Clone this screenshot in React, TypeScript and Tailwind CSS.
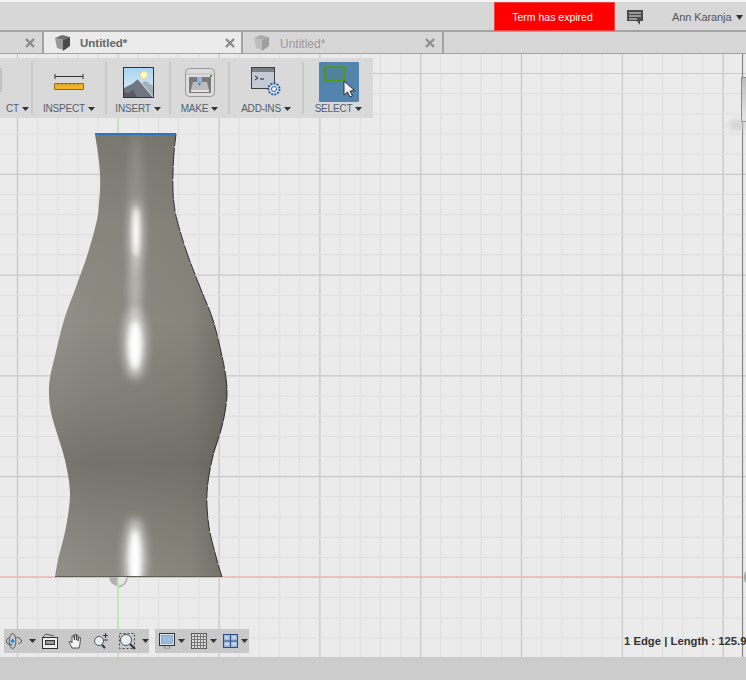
import React from "react";

const leftPts: [number, number][] = [[95,134],[98,153],[100,173],[100,190],[99,203],[97,220],[88,253],[76,287],[64,320],[55,356],[50,378],[49,395],[51,412],[56,430],[65,460],[70,493],[66,527],[58,560],[55,577]];
const rightPts: [number, number][] = [[176,134],[174,153],[173,173],[173,190],[174,203],[177,220],[187,253],[200,287],[213,320],[222,356],[226,378],[227,395],[225,412],[221,430],[212,460],[207,493],[209,527],[217,560],[222,577]];

function spline(p: [number, number][]) {
  let d = "";
  for (let i = 0; i < p.length - 1; i++) {
    const a = p[Math.max(i - 1, 0)], b = p[i], c = p[i + 1], e = p[Math.min(i + 2, p.length - 1)];
    d += `C${b[0] + (c[0] - a[0]) / 6} ${b[1] + (c[1] - a[1]) / 6} ${c[0] - (e[0] - b[0]) / 6} ${c[1] - (e[1] - b[1]) / 6} ${c[0]} ${c[1]}`;
  }
  return d;
}

const rightPath = `M176 134${spline(rightPts)}`;
const leftRev = [...leftPts].reverse();
const body = `${rightPath}L55 577${spline(leftRev)}Z`;

const xs = Array.from({ length: 37 }, (_, i) => 17.5 + i * 20.16);
const ys = Array.from({ length: 31 }, (_, i) => 73.5 + i * 20.16);

function Scene() {
  return (
    <svg className="absolute left-0 top-[-54px]" width="746" height="680" viewBox="0 0 746 680">
      <defs>
        <linearGradient id="h" x1="49" x2="227" y1="0" y2="0" gradientUnits="userSpaceOnUse">
          <stop offset="0" stopColor="#92928a" />
          <stop offset="0.25" stopColor="#8b8b82" />
          <stop offset="0.5" stopColor="#8a8980" />
          <stop offset="0.8" stopColor="#86857b" />
          <stop offset="1" stopColor="#6f6f69" />
        </linearGradient>
        <linearGradient id="v" x1="0" x2="0" y1="134" y2="577" gradientUnits="userSpaceOnUse">
          <stop offset="0" stopColor="#55554f" stopOpacity="0.35" />
          <stop offset="0.2" stopColor="#55554f" stopOpacity="0.1" />
          <stop offset="0.42" stopColor="#55554f" stopOpacity="0" />
          <stop offset="0.6" stopColor="#55554f" stopOpacity="0.2" />
          <stop offset="0.74" stopColor="#55554f" stopOpacity="0.45" />
          <stop offset="0.86" stopColor="#55554f" stopOpacity="0.2" />
          <stop offset="1" stopColor="#55554f" stopOpacity="0" />
        </linearGradient>
        <filter id="b1" x="-200%" y="-50%" width="500%" height="200%"><feGaussianBlur stdDeviation="2.5" /></filter>
        <filter id="b2" x="-200%" y="-50%" width="500%" height="200%"><feGaussianBlur stdDeviation="5" /></filter>
        <clipPath id="c"><path d={body} /></clipPath>
      </defs>
      {xs.map((x, i) => (
        <line key={i} x1={x} x2={x} y1="54" y2="657" stroke={i % 5 === 0 ? "#c6c6c6" : "#e1e1e1"} strokeWidth="1.2" />
      ))}
      {ys.map((y, i) => (
        <line key={i} x1="0" x2="746" y1={y} y2={y} stroke={i % 5 === 0 ? "#c9c9c9" : "#e1e1e1"} strokeWidth="1.2" />
      ))}
      <line x1="118" x2="118" y1="54" y2="657" stroke="#b8ecb8" strokeWidth="1.4" />
      <line x1="0" x2="742" y1="577" y2="577" stroke="#f2b6b6" strokeWidth="1.6" />
      <path d="M109 577a9 9 0 0 0 18 0Z" fill="#b1b1b1" />
      <path d="M118 577v9.5a9 9 0 0 0 9-9.5Z" fill="#e4e4e4" />
      <path d="M127 577a9 9 0 0 1-9 9.5" fill="none" stroke="#b1b1b1" strokeWidth="1.6" />
      <line x1="118" x2="118" y1="577" y2="657" stroke="#b8ecb8" strokeWidth="1.4" />
      <path d={body} fill="url(#h)" />
      <path d={body} fill="url(#v)" />
      <g clipPath="url(#c)">
        <ellipse cx="136" cy="220" rx="8" ry="90" fill="#fff" opacity="0.14" filter="url(#b2)" />
        <ellipse cx="136" cy="236" rx="6" ry="36" fill="#fff" opacity="0.55" filter="url(#b2)" />
        <ellipse cx="136" cy="232" rx="3.5" ry="25" fill="#fff" filter="url(#b1)" />
        <ellipse cx="135" cy="290" rx="5" ry="28" fill="#fff" opacity="0.4" filter="url(#b2)" />
        <ellipse cx="135" cy="343" rx="11" ry="36" fill="#fff" opacity="0.6" filter="url(#b2)" />
        <ellipse cx="135" cy="345" rx="6.5" ry="24" fill="#fff" filter="url(#b1)" />
        <ellipse cx="135" cy="558" rx="11" ry="40" fill="#fff" opacity="0.6" filter="url(#b2)" />
        <ellipse cx="135" cy="560" rx="6" ry="30" fill="#fff" filter="url(#b1)" />
      </g>
      <line x1="55" x2="222" y1="576.5" y2="576.5" stroke="#5e5e58" strokeWidth="1" />
      <path d={rightPath} fill="none" stroke="#111" strokeWidth="0.8" strokeDasharray="12 2 18 1" />
      <line x1="95" x2="176" y1="134" y2="134" stroke="#2f74bd" strokeWidth="2" />
    </svg>
  );
}

function X({ faded }: { faded?: boolean }) {
  return (
    <svg width="10" height="10" viewBox="0 0 10 10" className="shrink-0">
      <path d="M1 1l8 8M9 1l-8 8" stroke={faded ? "#8e8e8e" : "#8a8a8a"} strokeWidth="2.4" />
    </svg>
  );
}

function Cube({ faded }: { faded?: boolean }) {
  return (
    <svg width="17" height="16" viewBox="0 0 17 16" className={faded ? "opacity-40 shrink-0" : "shrink-0"}>
      <path d="M1 3l7-3 8 2-7 3z" fill="#6f6f6f" />
      <path d="M1 3l8 2v10l-6-2z" fill="#9a9a9a" />
      <path d="M9 5l7-3v9l-7 5z" fill="#4a4a4a" />
    </svg>
  );
}

function Caret() {
  return (
    <svg width="7" height="4" viewBox="0 0 7 4" className="shrink-0 ml-[3px]">
      <path d="M0 0h7L3.500 4z" fill="#333" />
    </svg>
  );
}

function Section({ w, label, children, sep = true, end = false }: { w: string; label: string; children?: React.ReactNode; sep?: boolean; end?: boolean }) {
  return (
    <>
      <div className={end ? `${w} flex flex-col items-end shrink-0` : `${w} flex flex-col items-center shrink-0`}>
        <div className="h-[41px] flex items-center justify-center">{children}</div>
        <div className={end ? "h-[12px] pt-[1px] pr-[2px] flex items-center text-[10px] leading-none text-[#53606e] tracking-[-0.2px] whitespace-nowrap" : "h-[12px] pt-[1px] flex items-center text-[10px] leading-none text-[#53606e] tracking-[-0.2px] whitespace-nowrap"}>
          {label}
          <Caret />
        </div>
      </div>
      {sep && <div className="w-[2px] h-[52px] bg-[#c9c9c9] shrink-0" />}
    </>
  );
}

function Ruler() {
  return (
    <svg width="30" height="18" viewBox="0 0 30 18">
      <path d="M1 1v5M29 1v5M1 3.500h28" stroke="#333" strokeWidth="1" fill="none" />
      <rect x="0.5" y="10.5" width="29" height="6" rx="0.5" fill="#efb52c" stroke="#8d6a16" />
      <path d="M4 11v2M8 11v2M12 11v2M16 11v2M20 11v2M24 11v2" stroke="#a67e1d" strokeWidth="1" />
    </svg>
  );
}

function InsertIcon() {
  return (
    <svg width="31" height="31" viewBox="0 0 31 31">
      <defs>
        <linearGradient id="sky" x1="0" x2="0" y1="0" y2="1">
          <stop offset="0" stopColor="#a9d4f0" />
          <stop offset="1" stopColor="#e4eff4" />
        </linearGradient>
      </defs>
      <rect x="0.5" y="0.5" width="30" height="30" fill="url(#sky)" stroke="#333" />
      <circle cx="21" cy="8" r="3.5" fill="#fff8c8" stroke="#f5dc8a" />
      <path d="M18 16l5-2 7 5v11H26z" fill="#a4b0bb" />
      <path d="M1 21l8-4 6-5 15 18H1z" fill="#6f7682" />
      <path d="M15 12l15 18" stroke="#e8e8e8" strokeWidth="1" />
      <path d="M1 30v-5l5 1 4-3 4 7z" fill="#565b66" />
    </svg>
  );
}

function MakeIcon() {
  return (
    <svg width="30" height="29" viewBox="0 0 30 29">
      <rect x="0.5" y="0.5" width="29" height="28" rx="4" fill="#dcdcdc" stroke="#9a9a9a" />
      <path d="M1 6h28" stroke="#bbb" />
      <rect x="25" y="7" width="2" height="2" fill="#37a24a" />
      <rect x="4" y="9" width="22" height="16" rx="1" fill="#7a7a7a" />
      <path d="M6 22l2-8h14l2 8z" fill="#bcbcbc" />
      <rect x="12" y="9" width="5" height="6" fill="#8fb2e0" />
      <path d="M13 15h3l-1.500 3z" fill="#4d74b0" />
      <rect x="6" y="22" width="18" height="2" fill="#e2e2e2" />
    </svg>
  );
}

function AddInIcon() {
  return (
    <svg width="31" height="30" viewBox="0 0 31 30">
      <rect x="0.5" y="0.5" width="23" height="21" fill="#c3cad6" stroke="#3b3f47" />
      <rect x="1" y="1" width="22" height="4" fill="#7a7f88" />
      <path d="M4 9l3 2-3 2M9 12h4" stroke="#222" strokeWidth="1" fill="none" />
      <circle cx="23" cy="22" r="5.5" fill="#dbe5f5" stroke="#2c5a98" strokeWidth="2" strokeDasharray="2 1.1" />
      <circle cx="23" cy="22" r="2.5" fill="#fff" stroke="#2c5a98" />
    </svg>
  );
}

function SelectIcon() {
  return (
    <div className="w-[40px] h-[40px] bg-[#5284ae] rounded-[1px] mt-[-1px]">
      <svg width="40" height="40" viewBox="0 0 40 40">
        <rect x="5.5" y="5" width="20" height="13.5" fill="#52819c" stroke="#4e9a16" strokeWidth="1.6" />
        <path d="M25 19v14l3.500-3 2.500 5 2.500-1-2.500-5 4.500-.5z" fill="#f4f4f4" stroke="#222" strokeWidth="0.9" />
      </svg>
    </div>
  );
}

function Orbit() {
  return (
    <svg width="17" height="18" viewBox="0 0 17 18">
      <ellipse cx="7" cy="9" rx="3.500" ry="8" fill="none" stroke="#555" />
      <path d="M3 5.500C1 6.500 .5 8 .5 9.500c0 2 2.500 3.500 6 3.500M11 5c3 .5 5.500 2 5.500 4 0 1.500-1.500 2.500-3.500 3" fill="none" stroke="#444" />
      <path d="M5 9h4M7 7v4" stroke="#1c7ed6" strokeWidth="1.6" />
    </svg>
  );
}

function PanFit() {
  return (
    <svg width="16" height="16" viewBox="0 0 16 16">
      <rect x="0.5" y="4.5" width="15" height="11" fill="#eee" stroke="#333" />
      <rect x="3.5" y="7.5" width="9" height="4" fill="#9b9b9b" stroke="#333" />
      <path d="M1 4l3-3 8 2" fill="none" stroke="#555" />
    </svg>
  );
}

function Hand() {
  return (
    <svg width="16" height="16" viewBox="0 0 16 16">
      <path d="M4 15L1 9l1-1 2 2V3l1.500-.5L6.500 7V1.500L8 1l.5 6V2l1.500.5V8l1-4 1.500.5L12 11l-1 4z" fill="#f2f2f2" stroke="#333" strokeWidth="0.8" />
    </svg>
  );
}

function Zoom({ win }: { win?: boolean }) {
  return (
    <svg width="17" height="17" viewBox="0 0 17 17">
      {win && <rect x="0.5" y="0.5" width="15" height="15" fill="none" stroke="#444" strokeDasharray="2 2" />}
      {!win && <path d="M10 2.500h5M12.500 0v5M10 7h5" stroke="#333" strokeWidth="1" />}
      <circle cx={win ? 7 : 6} cy={win ? 7 : 8} r={win ? 5.5 : 4.5} fill="#e3eff5" stroke="#555" />
      <path d={win ? "M11 11l5 5" : "M9 12l3 3"} stroke="#333" strokeWidth="2" />
    </svg>
  );
}

function DisplayIcon() {
  return (
    <svg width="16" height="16" viewBox="0 0 16 16">
      <rect x="0.5" y="0.5" width="15" height="12" fill="#dfe6ee" stroke="#333" />
      <rect x="2.500" y="2.500" width="11" height="8" fill="#9dbcdf" stroke="#6f8fb5" strokeWidth="0.6" />
      <path d="M5 15h6l-1-2H6z" fill="#eee" stroke="#555" strokeWidth="0.6" />
    </svg>
  );
}

function GridIcon() {
  return (
    <svg width="16" height="16" viewBox="0 0 16 16">
      <rect x="0.5" y="0.5" width="15" height="15" fill="#dcdcdc" stroke="#555" />
      <path d="M3.500 0v16M6.500 0v16M9.500 0v16M12.500 0v16M0 3.500h16M0 6.500h16M0 9.500h16M0 12.500h16" stroke="#777" strokeWidth="1" />
    </svg>
  );
}

function ViewsIcon() {
  return (
    <svg width="15" height="14" viewBox="0 0 15 14">
      <rect x="0.5" y="0.5" width="14" height="13" fill="#9fbce0" stroke="#2f4f80" />
      <path d="M7.500 0v14M0 7h15" stroke="#2f4f80" />
      <rect x="2.500" y="2.500" width="3" height="2" fill="#d7e4f4" />
      <rect x="9.500" y="2.500" width="3" height="2" fill="#d7e4f4" />
      <rect x="2.500" y="9" width="3" height="2" fill="#d7e4f4" />
      <rect x="9.500" y="9" width="3" height="2" fill="#d7e4f4" />
    </svg>
  );
}

export default function App() {
  return (
    <div className="relative w-[746px] h-[680px] overflow-hidden flex flex-col bg-[#ebebeb] [font-family:'Liberation_Sans',sans-serif]">
      {/* top strip */}
      <div className="h-[2px] bg-[#f4f4f4] shrink-0" />
      <div className="h-[30px] bg-[#d7d7d7] border-b-2 border-[#a3a3a3] flex shrink-0">
        <div className="w-[494px] shrink-0" />
        <div className="w-[121px] h-[29px] bg-[#fe0000] border border-[#ee4444] text-white text-[10.5px] flex items-center justify-center pt-[2px] pr-[4px] shrink-0">
          Term has expired
        </div>
        <div className="w-[12px] shrink-0" />
        <svg width="17" height="16" viewBox="0 0 17 16" className="mt-[8px] shrink-0">
          <path d="M0 0h16v11h-3v4l-3-4H0z" fill="#4a4a4a" />
          <path d="M2 3h12M2 6h12M2 9h8" stroke="#e8e8e8" strokeWidth="1" />
        </svg>
        <div className="w-[28px] shrink-0" />
        <div className="text-[11px] tracking-[-0.1px] text-[#555] h-[28px] pt-[2px] flex items-center whitespace-nowrap">
          Ann Karanja
          <svg width="7" height="5" viewBox="0 0 7 5" className="ml-[5px]"><path d="M0 0h7L3.500 5z" fill="#333" /></svg>
        </div>
      </div>
      {/* tabs */}
      <div className="h-[22px] bg-[#d7d7d7] border-b border-[#a3a3a3] flex shrink-0">
        <div className="w-[44px] border-r-2 border-[#a3a3a3] flex items-center justify-end pr-[7px] pt-[1px]"><X /></div>
        <div className="w-[199px] bg-[#ebebeb] border-r-2 border-[#a3a3a3] flex items-center pl-[10px] pr-[6px] pt-[1px]">
          <Cube />
          <span className="ml-[9px] text-[11.5px] font-bold text-[#666] flex-1 pt-[2px]">Untitled*</span>
          <X />
        </div>
        <div className="w-[201px] border-r-2 border-[#a3a3a3] flex items-center pl-[10px] pr-[7px] pt-[1px]">
          <Cube faded />
          <span className="ml-[10px] text-[12px] text-[#9a9a9a] flex-1 pt-[2px]">Untitled*</span>
          <X faded />
        </div>
      </div>
      {/* canvas */}
      <div className="relative flex-1 bg-[#ebebeb] overflow-hidden">
        <Scene />
        {/* right edge view cube sliver */}
        <div className="absolute right-[3px] top-0 bottom-0 w-[1px] bg-[#7f7f7f]" />
        <div className="absolute right-0 top-[23px] w-[5px] h-[45px] bg-gradient-to-b from-[#bdbdbd] to-[#e6e6e6] border-t border-l border-b border-[#8a8a8a]" />
        <div className="absolute right-0 top-[68px] w-[16px] h-[6px] bg-[#c8c8c8] blur-[3px]" />
        <div className="absolute left-[744px] top-[514px] w-[16px] h-[18px] rounded-full border-2 border-[#a9a9a9]" />

        {/* main toolbar */}
        <div className="absolute left-0 top-[4px] w-[373px] h-[60px] bg-[#d9d9d9] flex items-center">
          <Section w="w-[31px]" label="CT" end>
            <div className="w-[2px] h-[24px] bg-[#c2c2c2] mr-[29px] mt-[-4px]" />
          </Section>
          <Section w="w-[72px]" label="INSPECT"><Ruler /></Section>
          <Section w="w-[62px]" label="INSERT"><InsertIcon /></Section>
          <Section w="w-[57px]" label="MAKE"><MakeIcon /></Section>
          <Section w="w-[72px]" label="ADD-INS"><AddInIcon /></Section>
          <Section w="w-[69px]" label="SELECT" sep={false}><SelectIcon /></Section>
        </div>

        {/* navigation bar */}
        <div className="absolute left-[4px] top-[575px] w-[145px] h-[24px] bg-[#c9c9c9] flex items-center pl-[2px]">
          <Orbit />
          <div className="ml-[4px]"><Caret /></div>
          <div className="ml-[6px]"><PanFit /></div>
          <div className="ml-[10px]"><Hand /></div>
          <div className="ml-[9px]"><Zoom /></div>
          <div className="ml-[9px]"><Zoom win /></div>
          <div className="ml-[3px]"><Caret /></div>
        </div>
        <div className="absolute left-[155px] top-[575px] w-[94px] h-[24px] bg-[#c9c9c9] flex items-center pl-[4px]">
          <DisplayIcon />
          <Caret />
          <div className="ml-[6px]"><GridIcon /></div>
          <Caret />
          <div className="ml-[6px]"><ViewsIcon /></div>
          <Caret />
        </div>

        {/* status */}
        <div className="absolute left-[624px] top-[581px] text-[11.3px] font-bold text-[#333] leading-[13px] whitespace-nowrap">
          1 Edge | Length : 125.96
        </div>
      </div>
      {/* bottom bar */}
      <div className="h-[23px] bg-[#cccccc] shrink-0" />
    </div>
  );
}
